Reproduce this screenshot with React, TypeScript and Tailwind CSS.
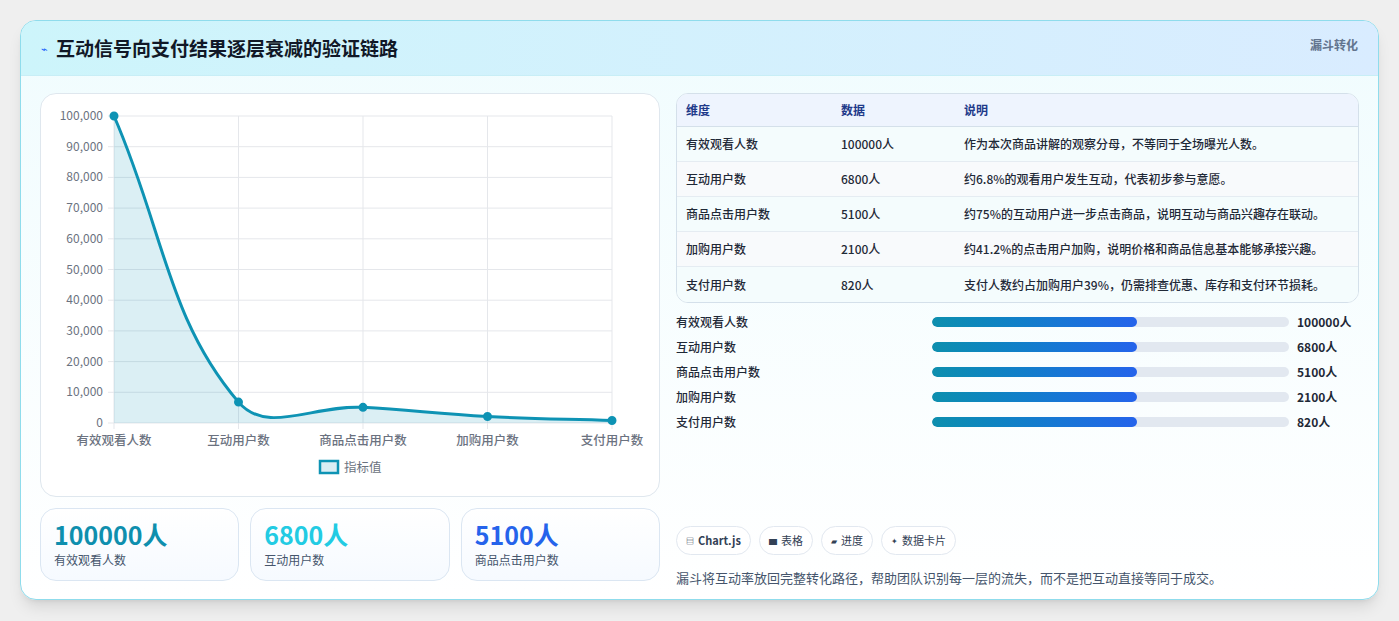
const labels = ["有效观看人数", "互动用户数", "商品点击用户数", "加购用户数", "支付用户数"];
const values = [100000, 6800, 5100, 2100, 820];

const rows = [
  ["有效观看人数", "100000人", "作为本次商品讲解的观察分母，不等同于全场曝光人数。"],
  ["互动用户数", "6800人", "约6.8%的观看用户发生互动，代表初步参与意愿。"],
  ["商品点击用户数", "5100人", "约75%的互动用户进一步点击商品，说明互动与商品兴趣存在联动。"],
  ["加购用户数", "2100人", "约41.2%的点击用户加购，说明价格和商品信息基本能够承接兴趣。"],
  ["支付用户数", "820人", "支付人数约占加购用户39%，仍需排查优惠、库存和支付环节损耗。"],
];

const X0 = 73;
const X1 = 571;
const Y0 = 22;
const Y1 = 329;

function pts() {
  return values.map((v, i) => ({
    x: X0 + ((X1 - X0) / 4) * i,
    y: Y1 - ((Y1 - Y0) * v) / 100000,
  }));
}

// chart.js style spline, tension 0.4
function curve() {
  const p = pts();
  const t = 0.4;
  let d = `M${p[0].x},${p[0].y}`;
  const ctrl = p.map((c, i) => {
    const prev = p[Math.max(0, i - 1)];
    const next = p[Math.min(p.length - 1, i + 1)];
    const d01 = Math.hypot(c.x - prev.x, c.y - prev.y);
    const d12 = Math.hypot(next.x - c.x, next.y - c.y);
    let fa = (t * d01) / (d01 + d12 || 1);
    let fb = (t * d12) / (d01 + d12 || 1);
    return {
      px: c.x - fa * (next.x - prev.x),
      py: c.y - fa * (next.y - prev.y),
      nx: c.x + fb * (next.x - prev.x),
      ny: c.y + fb * (next.y - prev.y),
    };
  });
  for (let i = 1; i < p.length; i++) {
    d += ` C${ctrl[i - 1].nx},${ctrl[i - 1].ny} ${ctrl[i].px},${ctrl[i].py} ${p[i].x},${p[i].y}`;
  }
  return d;
}

function Chart() {
  const p = pts();
  const line = curve();
  const ticks = [0, 10000, 20000, 30000, 40000, 50000, 60000, 70000, 80000, 90000, 100000];
  return (
    <svg width="620" height="401" className="block">
      {ticks.map((tk) => {
        const y = Y1 - ((Y1 - Y0) * tk) / 100000;
        return (
          <g key={tk}>
            <line x1={X0 - 6} x2={X1} y1={y} y2={y} stroke="#e5e7eb" />
            <text x={X0 - 11} y={y + 4} textAnchor="end" fontSize="12" fill="#6b7280">
              {tk.toLocaleString("en-US")}
            </text>
          </g>
        );
      })}
      {p.map((q, i) => (
        <line key={i} x1={q.x} x2={q.x} y1={Y0} y2={Y1 + 6} stroke="#e5e7eb" />
      ))}
      <path d={`${line} L${X1},${Y1} L${X0},${Y1} Z`} fill="#0e93b4" fillOpacity="0.15" />
      <path d={line} fill="none" stroke="#0e93b4" strokeWidth="3" />
      {p.map((q, i) => (
        <circle key={i} cx={q.x} cy={q.y} r="3.5" fill="#0e93b4" stroke="#0e93b4" strokeWidth="2" />
      ))}
      {p.map((q, i) => (
        <text key={i} x={q.x} y={351} textAnchor="middle" fontSize="12.5" fontWeight="500" fill="#6b7280">
          {labels[i]}
        </text>
      ))}
      <rect x="279" y="367" width="18" height="12" fill="#dbeef4" stroke="#0e93b4" strokeWidth="2.5" />
      <text x="303" y="378" fontSize="12.5" fill="#6b7280">指标值</text>
    </svg>
  );
}

export default function App() {
  return (
    <div
      className="w-[1399px] h-[621px] bg-[#efefef] px-5 pt-5"
      style={{ fontFamily: '"Noto Sans CJK SC", "Noto Sans", sans-serif' }}
    >
      <div className="h-[580px] rounded-2xl border border-[#8fdcec] bg-gradient-to-b from-[#f0fcfe] to-white overflow-hidden shadow-lg">
        <div className="h-[55px] flex items-center justify-between px-5 bg-gradient-to-r from-[#cdf5fb] to-[#d9ecff] border-b border-[#c8eef6]">
          <div className="flex items-center gap-2">
            <span className="text-[11px] text-blue-600">⌁</span>
            <h1 className="text-[19px] font-bold text-[#111827]">互动信号向支付结果逐层衰减的验证链路</h1>
          </div>
          <span className="self-start mt-4 text-xs font-semibold text-slate-500">漏斗转化</span>
        </div>

        <div className="flex gap-4 px-[19px] pt-[17px]">
          <div className="w-[620px] flex flex-col gap-[11px]">
            <div className="h-[404px] rounded-2xl border border-[#dfe7ee] bg-white">
              <Chart />
            </div>
            <div className="grid grid-cols-3 gap-[11px]">
              {[
                ["100000人", "有效观看人数", "text-[#0e8fae]"],
                ["6800人", "互动用户数", "text-[#22cbe3]"],
                ["5100人", "商品点击用户数", "text-[#2563eb]"],
              ].map(([v, l, c]) => (
                <div key={l} className="h-[73px] rounded-2xl border border-[#dbe6f2] bg-gradient-to-b from-white to-[#f6faff] px-[13px] pt-[9px]">
                  <div className={`text-[25px] font-bold leading-8 ${c}`}>{v}</div>
                  <div className="text-xs text-slate-600 mt-0.5">{l}</div>
                </div>
              ))}
            </div>
          </div>

          <div className="flex-1 flex flex-col">
            <div className="rounded-xl border border-[#d4e0ea] overflow-hidden bg-white">
              <div className="flex h-[33px] items-center bg-[#eef4fe] border-b border-[#d4e0ea] text-xs font-semibold text-[#1e3a8a]">
                <div className="w-[164px] pl-[9px]">维度</div>
                <div className="w-[123px]">数据</div>
                <div>说明</div>
              </div>
              {rows.map((r, i) => (
                <div
                  key={r[0]}
                  className={`flex h-[35px] items-center text-xs font-medium text-[#1f2937] ${i < 4 ? "border-b border-[#e5ecf2]" : ""} ${i % 2 === 0 ? "bg-[#f4fcfd]" : "bg-[#f8fafc]"}`}
                >
                  <div className="w-[164px] pl-[9px]">{r[0]}</div>
                  <div className="w-[123px]">{r[1]}</div>
                  <div>{r[2]}</div>
                </div>
              ))}
            </div>

            <div className="mt-[10px] flex flex-col gap-[7px]">
              {rows.map((r) => (
                <div key={r[0]} className="flex items-center h-[18px] text-xs font-medium text-[#1f2937]">
                  <div className="w-[256px]">{r[0]}</div>
                  <div className="w-[357px] h-[10px] rounded-full bg-[#e2e8f0] overflow-hidden">
                    <div className="h-full w-[205px] rounded-full bg-gradient-to-r from-[#0e8fae] to-[#2563eb]" />
                  </div>
                  <div className="ml-2 font-semibold">{r[1]}</div>
                </div>
              ))}
            </div>

            <div className="mt-[95px] flex gap-2">
              {[
                ["▤", "Chart.js", "font-bold"],
                ["▆", "表格", ""],
                ["▰", "进度", ""],
                ["✦", "数据卡片", ""],
              ].map(([ic, t, w]) => (
                <span key={t} className={`h-[29px] px-[9px] flex items-center gap-1 rounded-full border border-[#e2e8f0] bg-white text-[11px] text-[#334155] ${w}`}>
                  <span className="text-[8px] text-[#334155]">{ic}</span>
                  {t}
                </span>
              ))}
            </div>
            <p className="mt-[13px] text-[13px] text-slate-600">
              漏斗将互动率放回完整转化路径，帮助团队识别每一层的流失，而不是把互动直接等同于成交。
            </p>
          </div>
        </div>
      </div>
    </div>
  );
}
